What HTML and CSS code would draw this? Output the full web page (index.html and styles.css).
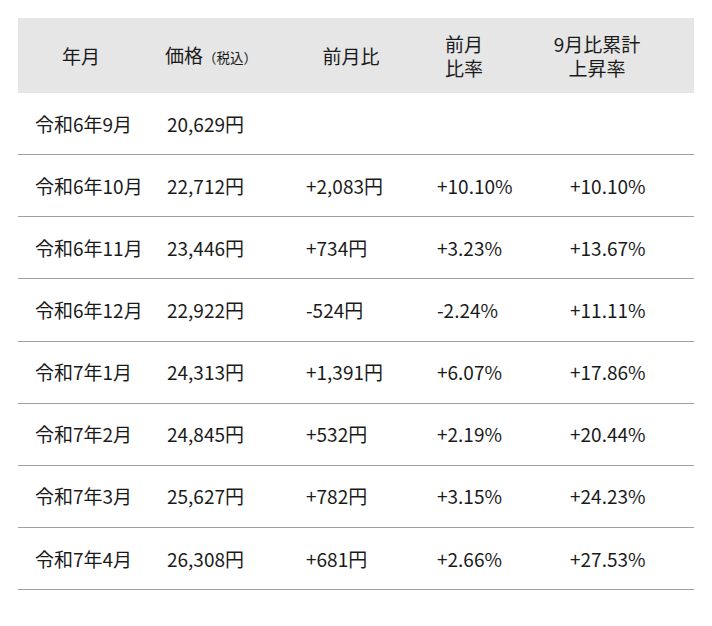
FILE: index.html
```html
<!DOCTYPE html>
<html lang="ja">
<head>
<meta charset="utf-8">
<link rel="stylesheet" href="styles.css">
</head>
<body>
<div class="wrap">
<table class="price">
  <colgroup>
    <col class="c1"><col class="c2"><col class="c3"><col class="c4"><col class="c5">
  </colgroup>
  <thead>
    <tr>
      <th class="h1">年月</th>
      <th class="h2">価格<small>（税込）</small></th>
      <th class="h3">前月比</th>
      <th class="h4"><span class="ln">前月</span><span class="ln">比率</span></th>
      <th class="h5"><span class="ln">9月比累計</span><span class="ln">上昇率</span></th>
    </tr>
  </thead>
  <tbody>
    <tr><td>令和6年9月</td><td>20,629円</td><td></td><td></td><td></td></tr>
    <tr><td>令和6年10月</td><td>22,712円</td><td>+2,083円</td><td>+10.10%</td><td>+10.10%</td></tr>
    <tr><td>令和6年11月</td><td>23,446円</td><td>+734円</td><td>+3.23%</td><td>+13.67%</td></tr>
    <tr><td>令和6年12月</td><td>22,922円</td><td>-524円</td><td>-2.24%</td><td>+11.11%</td></tr>
    <tr><td>令和7年1月</td><td>24,313円</td><td>+1,391円</td><td>+6.07%</td><td>+17.86%</td></tr>
    <tr><td>令和7年2月</td><td>24,845円</td><td>+532円</td><td>+2.19%</td><td>+20.44%</td></tr>
    <tr><td>令和7年3月</td><td>25,627円</td><td>+782円</td><td>+3.15%</td><td>+24.23%</td></tr>
    <tr><td>令和7年4月</td><td>26,308円</td><td>+681円</td><td>+2.66%</td><td>+27.53%</td></tr>
  </tbody>
</table>
</div>
</body>
</html>
```

FILE: styles.css
```css
html, body {
  margin: 0;
  padding: 0;
  background: #fff;
}
body {
  font-family: "Noto Sans CJK JP", "Noto Sans", sans-serif;
  color: #1a1a1a;
}
.wrap {
  padding: 18px 18px 0 18px;
}
.price {
  width: 676px;
  border-collapse: collapse;
  table-layout: fixed;
}
.c1 { width: 132px; }
.c2 { width: 139px; }
.c3 { width: 131px; }
.c4 { width: 133px; }
.c5 { width: 141px; }

.price thead tr {
  background: #e6e6e6;
}
.price th {
  height: 75px;
  padding: 0;
  font-size: 19px;
  font-weight: 400;
  line-height: 24px;
  text-align: center;
  vertical-align: middle;
}
.price th .ln {
  display: block;
  line-height: 24px;
}
.price th small {
  font-size: 13.5px;
}
.h1 { padding-right: 6px !important; }
.h2 { padding-right: 17px !important; }
.h3 { padding-right: 7px !important; }
.h4 { padding-right: 45px !important; }
.h5 { padding-right: 53px !important; }

.price td {
  height: 61.15px;
  padding: 0 0 0 17px;
  font-size: 19px;
  line-height: 24px;
  text-align: left;
  vertical-align: middle;
  border-bottom: 1px solid #a0a0a0;
}
```
